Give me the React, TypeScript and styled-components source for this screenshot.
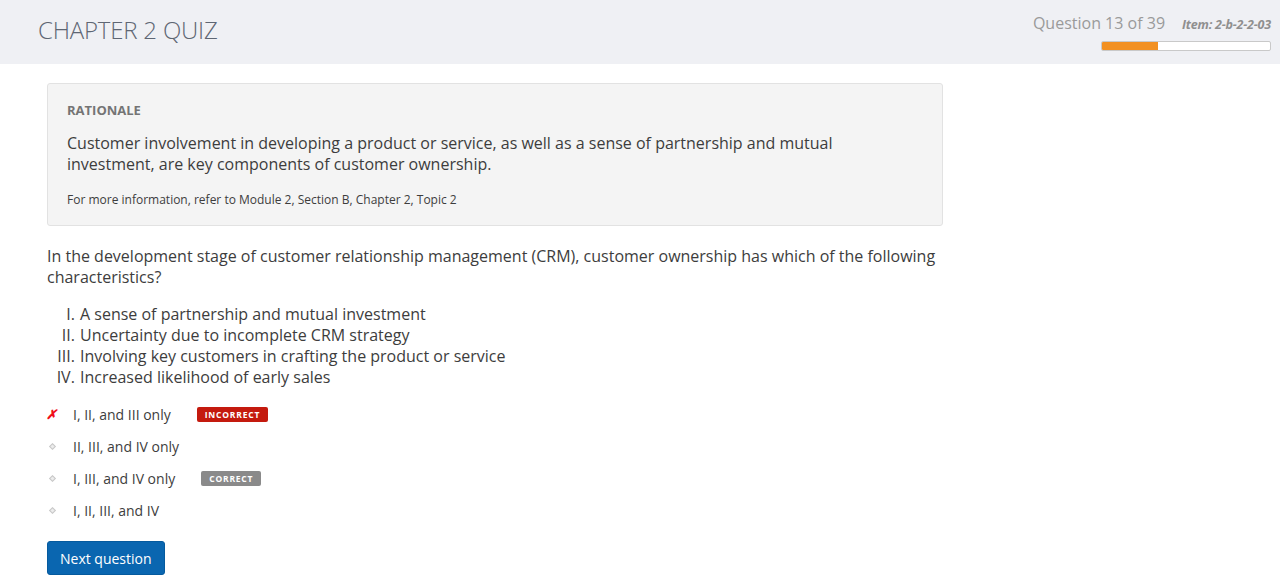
import React, { ReactElement } from "react";
import styled, { createGlobalStyle } from "styled-components";

const GlobalStyle = createGlobalStyle`
  html, body {
    margin: 0;
    padding: 0;
    background: #ffffff;
    font-family: "Open Sans", "Noto Sans", sans-serif;
    color: #3d3d3d;
  }
`;

const Header = styled.header`
  display: flex;
  justify-content: space-between;
  align-items: flex-start;

  height: 64px;
  padding: 0 9px 0 38px;
  box-sizing: border-box;
  background-color: #eff0f4;
`;

const Title = styled.h1`
  margin: 13px 0 0;
  font-size: 24px;
  font-weight: 300;
  line-height: 34px;
  color: #5e6673;
  letter-spacing: -0.2px;
`;

const Progress = styled.div`
  display: flex;
  flex-direction: column;
  align-items: flex-end;
  padding-top: 11px;
`;

const ProgressLabels = styled.div`
  display: flex;
  align-items: baseline;
  gap: 17px;
`;

const Counter = styled.span`
  font-size: 16px;
  color: #9a9a9a;
  line-height: 24px;
`;

const ItemCode = styled.span`
  font-size: 12.5px;
  font-weight: 700;
  font-style: italic;
  color: #8f8f8f;
  letter-spacing: -0.2px;
`;

const Bar = styled.div`
  width: 168px;
  height: 8px;
  margin-top: 6px;
  border: 1px solid #c9c9c9;
  border-radius: 2px;
  background: #ffffff;
  overflow: hidden;
  box-sizing: content-box;
`;

const Fill = styled.div`
  height: 100%;
  background: #f29021;
`;

const Main = styled.main`
  width: 896px;
  padding: 19px 0 0 47px;
`;

const Rationale = styled.section`
  padding: 17px 19px 17px;
  background: #f4f4f4;
  border: 1px solid #e2e2e2;
  border-radius: 3px;
`;

const RationaleHeading = styled.div`
  font-size: 13px;
  font-weight: 700;
  color: #747474;
  line-height: 18px;
`;

const RationaleText = styled.p`
  margin: 14px 0 0;
  font-size: 16px;
  line-height: 21px;
  color: #3d3d3d;
`;

const MoreInfo = styled.p`
  margin: 16px 0 0;
  font-size: 12px;
  line-height: 17px;
  color: #3d3d3d;
`;

const Question = styled.p`
  margin: 20px 0 0;
  font-size: 16px;
  line-height: 21px;
`;

const Statements = styled.ol`
  list-style-type: upper-roman;
  margin: 16px 0 0;
  padding-left: 32px;
  font-size: 16px;
  line-height: 21px;

  li {
    padding-left: 1px;
  }
`;

const Options = styled.div`
  display: flex;
  flex-direction: column;
  margin-top: 10px;
`;

const Option = styled.div`
  display: flex;
  align-items: center;
  height: 32px;
  font-size: 14px;
  color: #3d3d3d;
`;

const Marker = styled.span`
  display: inline-flex;
  justify-content: center;
  align-items: center;
  width: 9px;
  margin-right: 17px;
`;

const Diamond = styled.span`
  width: 5px;
  height: 5px;
  margin-left: 1px;
  border: 1px solid #c8c8c8;
  box-sizing: border-box;
  background: #ececec;
  transform: rotate(45deg);
`;

const Cross = styled.span`
  color: #f0101a;
  font-size: 13px;
  font-weight: 700;
  font-style: italic;
  line-height: 1;
`;

const Badge = styled.span<{ $tone: "bad" | "good" }>`
  margin-left: 26px;
  padding: 0 8px;
  height: 15px;
  line-height: 15px;
  font-size: 8.5px;
  font-weight: 700;
  letter-spacing: 0.8px;
  color: #ffffff;
  border-radius: 2px;
  background: ${(p) => (p.$tone === "bad" ? "#c41a0e" : "#8a8a8a")};
`;

const NextButton = styled.button`
  margin-top: 15px;
  height: 34px;
  padding: 0 12px;
  border: 1px solid #055a9e;
  border-radius: 3px;
  background: #0a66b0;
  color: #ffffff;
  font-family: "Open Sans", sans-serif;
  font-size: 14px;
  cursor: pointer;
`;

const statements = [
  "A sense of partnership and mutual investment",
  "Uncertainty due to incomplete CRM strategy",
  "Involving key customers in crafting the product or service",
  "Increased likelihood of early sales",
];

type OptionType = { label: string; state?: "wrong" | "right"; picked?: boolean };

const options: OptionType[] = [
  { label: "I, II, and III only", state: "wrong", picked: true },
  { label: "II, III, and IV only" },
  { label: "I, III, and IV only", state: "right" },
  { label: "I, II, III, and IV" },
];

const App = (): ReactElement => {
  const current = 13;
  const total = 39;

  return (
    <>
      <GlobalStyle />
      <Header>
        <Title>CHAPTER 2 QUIZ</Title>
        <Progress>
          <ProgressLabels>
            <Counter>
              Question {current} of {total}
            </Counter>
            <ItemCode>Item: 2-b-2-2-03</ItemCode>
          </ProgressLabels>
          <Bar>
            <Fill style={{ width: `${(current / total) * 100}%` }} />
          </Bar>
        </Progress>
      </Header>

      <Main>
        <Rationale>
          <RationaleHeading>RATIONALE</RationaleHeading>
          <RationaleText>
            Customer involvement in developing a product or service, as well as a sense of
            partnership and mutual investment, are key components of customer ownership.
          </RationaleText>
          <MoreInfo>For more information, refer to Module 2, Section B, Chapter 2, Topic 2</MoreInfo>
        </Rationale>

        <Question>
          In the development stage of customer relationship management (CRM), customer ownership
          has which of the following characteristics?
        </Question>

        <Statements>
          {statements.map((s) => (
            <li key={s}>{s}</li>
          ))}
        </Statements>

        <Options>
          {options.map((o) => (
            <Option key={o.label}>
              <Marker>{o.picked ? <Cross>✗</Cross> : <Diamond />}</Marker>
              {o.label}
              {o.state === "wrong" ? <Badge $tone="bad">INCORRECT</Badge> : null}
              {o.state === "right" ? <Badge $tone="good">CORRECT</Badge> : null}
            </Option>
          ))}
        </Options>

        <NextButton>Next question</NextButton>
      </Main>
    </>
  );
};

export default App;
